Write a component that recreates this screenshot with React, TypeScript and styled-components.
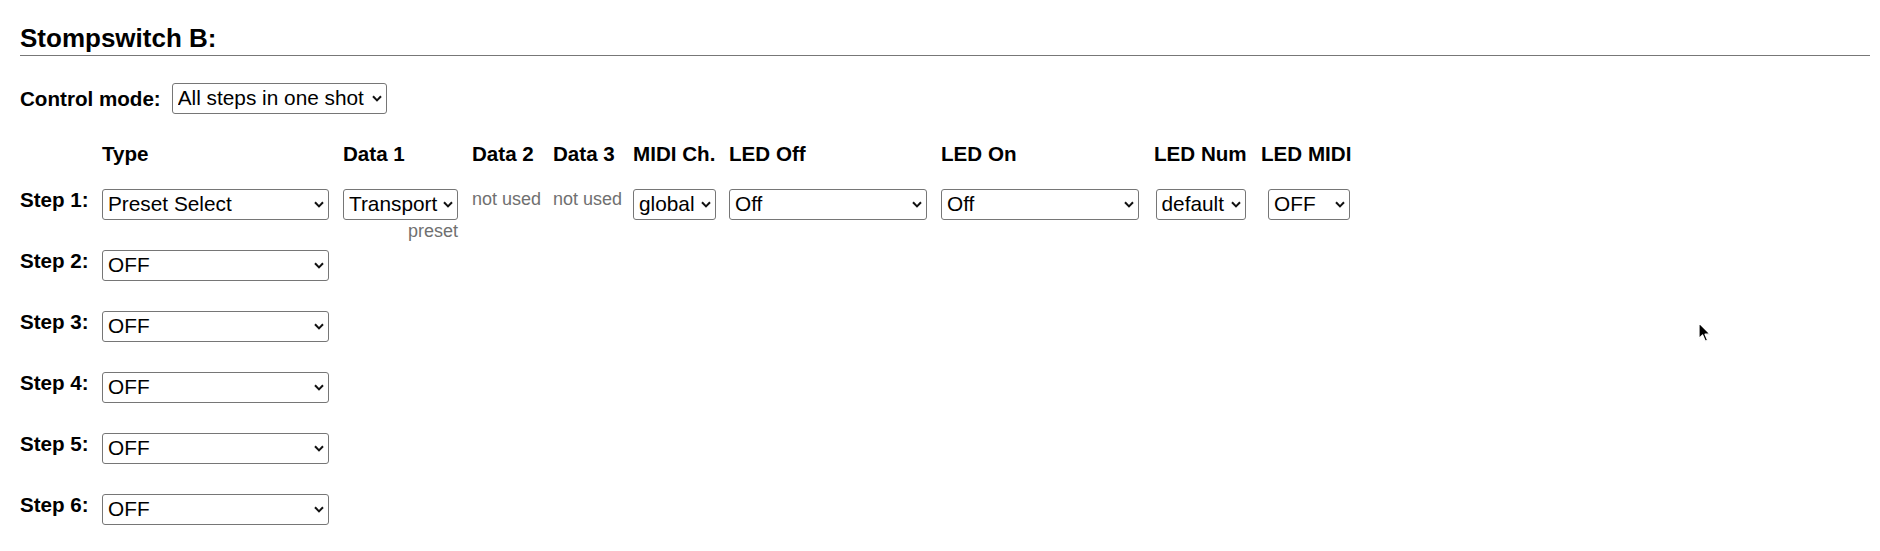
import React from "react";
import styled, { createGlobalStyle, css } from "styled-components";

const Global = createGlobalStyle`
  html, body { margin: 0; padding: 0; background: #ffffff; }
  body { font-family: "Liberation Sans", Arial, sans-serif; color: #000; }
`;

const Page = styled.div`
  position: relative;
  padding: 23px 10px 0 20px;
  min-height: 551px;
  box-sizing: border-box;
`;

const Title = styled.h2`
  margin: 0;
  font-size: 26px;
  line-height: 30px;
  font-weight: 700;
  padding-bottom: 2px;
  border-bottom: 1px solid #777;
`;

const ModeRow = styled.div`
  display: flex;
  align-items: center;
  gap: 11px;
  margin-top: 27px;
`;

const BoldLabel = styled.span`
  font-size: 20.6px;
  font-weight: 700;
  line-height: 22px;
  white-space: nowrap;
`;

const columns = css`
  display: grid;
  grid-template-columns: 68px 227px 115px 67px 66px 82px 198px 199px 93px 89px;
  column-gap: 14px;
  align-items: start;
`;

const Table = styled.div`
  margin-top: 28px;
`;

const HeaderRow = styled.div`
  ${columns};
  height: 37px;
  margin-bottom: 10px;
`;

const HeaderCell = styled.div`
  font-size: 20.6px;
  font-weight: 700;
  line-height: 24px;
  white-space: nowrap;
`;

const StepRow = styled.div`
  ${columns};
  height: 51px;
  margin-bottom: 10px;
`;

const Cell = styled.div<{ $align?: "start" | "center" | "end" }>`
  display: flex;
  flex-direction: column;
  align-items: ${(p) =>
    p.$align === "center" ? "center" : p.$align === "end" ? "flex-end" : "flex-start"};
`;

const Hint = styled.div<{ $below?: boolean }>`
  font-size: 18px;
  line-height: 21px;
  color: #707070;
  white-space: nowrap;
  margin-top: ${(p) => (p.$below ? "1px" : "0")};
`;

const SelectWrap = styled.span<{ $w: number }>`
  position: relative;
  display: inline-block;
  width: ${(p) => p.$w}px;
  height: 31px;
  flex: none;
`;

const NativeSelect = styled.select`
  appearance: none;
  -webkit-appearance: none;
  box-sizing: border-box;
  width: 100%;
  height: 31px;
  margin: 0;
  padding: 0 18px 1px 5px;
  border: 1px solid #767676;
  border-radius: 3px;
  background: #ffffff;
  color: #000;
  font-family: "Liberation Sans", Arial, sans-serif;
  font-size: 20.8px;
  line-height: 28px;
  outline: none;
`;

const Chevron = styled.svg`
  position: absolute;
  right: 5px;
  top: 12px;
  width: 10px;
  height: 7px;
  pointer-events: none;
`;

const Cursor = styled.svg`
  position: absolute;
  left: 1698px;
  top: 322px;
  width: 14px;
  height: 21px;
`;

type SelProps = { w: number; value: string; options?: string[] };

function Select({ w, value, options }: SelProps) {
  const opts = options ?? [value];
  return (
    <SelectWrap $w={w}>
      <NativeSelect defaultValue={value}>
        {opts.map((o) => (
          <option key={o} value={o}>
            {o}
          </option>
        ))}
      </NativeSelect>
      <Chevron viewBox="0 0 10 7">
        <path d="M1 1.2 L5 5.4 L9 1.2" fill="none" stroke="#111" strokeWidth="2" />
      </Chevron>
    </SelectWrap>
  );
}

const headers = [
  "",
  "Type",
  "Data 1",
  "Data 2",
  "Data 3",
  "MIDI Ch.",
  "LED Off",
  "LED On",
  "LED Num",
  "LED MIDI",
];

const typeOptions = ["OFF", "Preset Select", "Program Change", "Control Change", "Note On"];

export default function App() {
  return (
    <>
      <Global />
      <Page>
        <Title>Stompswitch B:</Title>
        <ModeRow>
          <BoldLabel>Control mode:</BoldLabel>
          <Select w={215} value="All steps in one shot" options={["All steps in one shot", "One step per press"]} />
        </ModeRow>
        <Table>
          <HeaderRow>
            {headers.map((h, i) => (
              <HeaderCell key={i}>{h}</HeaderCell>
            ))}
          </HeaderRow>
          <StepRow>
            <BoldLabel>Step 1:</BoldLabel>
            <Cell>
              <Select w={227} value="Preset Select" options={typeOptions} />
            </Cell>
            <Cell $align="end">
              <Select w={115} value="Transport" />
              <Hint $below>preset</Hint>
            </Cell>
            <Cell>
              <Hint>not used</Hint>
            </Cell>
            <Cell>
              <Hint>not used</Hint>
            </Cell>
            <Cell>
              <Select w={83} value="global" />
            </Cell>
            <Cell>
              <Select w={198} value="Off" />
            </Cell>
            <Cell>
              <Select w={198} value="Off" />
            </Cell>
            <Cell $align="center">
              <Select w={90} value="default" />
            </Cell>
            <Cell $align="end">
              <Select w={82} value="OFF" options={["OFF", "ON"]} />
            </Cell>
          </StepRow>
          {[2, 3, 4, 5, 6].map((n) => (
            <StepRow key={n}>
              <BoldLabel>Step {n}:</BoldLabel>
              <Cell>
                <Select w={227} value="OFF" options={typeOptions} />
              </Cell>
            </StepRow>
          ))}
        </Table>
        <Cursor viewBox="0 0 14 21">
          <path
            d="M1 1 L1 16.5 L4.6 13 L7.3 19.2 L9.6 18.2 L7 12.2 L12 12.2 Z"
            fill="#000"
            stroke="#fff"
            strokeWidth="1.2"
            strokeLinejoin="round"
          />
        </Cursor>
      </Page>
    </>
  );
}
